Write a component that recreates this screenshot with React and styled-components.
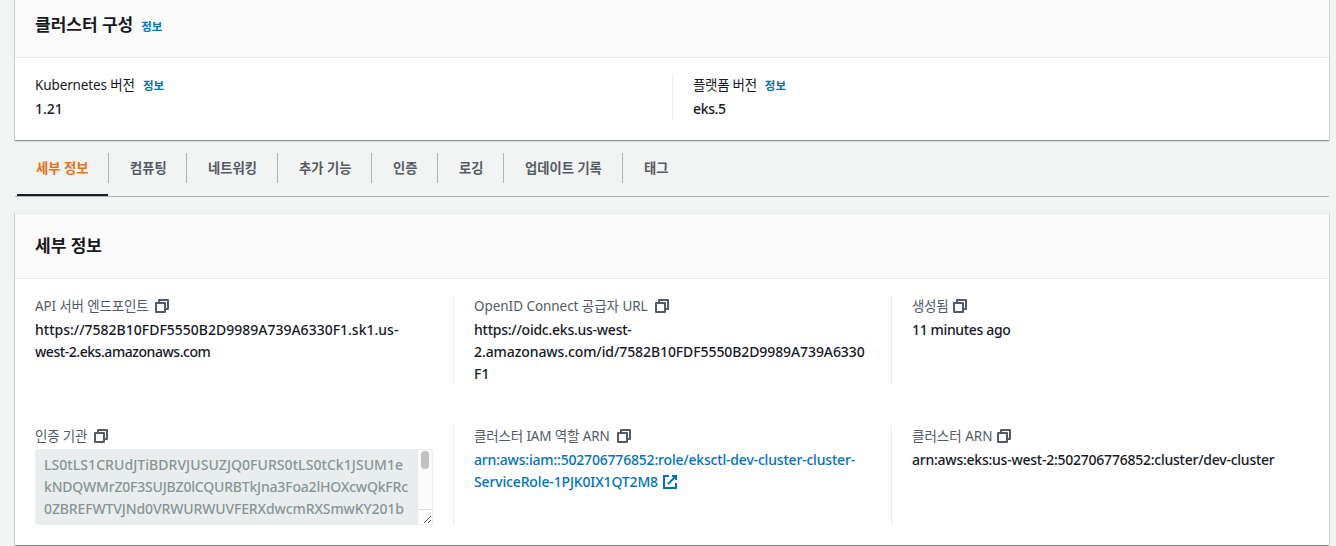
import React from "react";
import styled, { createGlobalStyle } from "styled-components";

const GlobalStyle = createGlobalStyle`
  * { box-sizing: border-box; }
  body {
    margin: 0;
    background: #f2f3f3;
    color: #16191f;
    font: 14px/22px "Noto Sans", "Noto Sans CJK KR", sans-serif;
    overflow: hidden;
  }
`;

const Page = styled.main`
  width: 1314px;
  height: 546px;
  margin-left: 15px;
  display: flex;
  flex-direction: column;
  overflow: visible;
`;

const Panel = styled.section`
  background: #fff;
  border-top: ${(p) => (p.$continued ? "0" : "1px solid #eaeded")};
  box-shadow: 1px 0 0 0 #d0d4d4, -1px 0 0 0 #c9cecf, 0 1px 0 0 #d9dddd;
  border-bottom: 1px solid #879596;
`;

const PanelHeader = styled.header`
  display: flex;
  align-items: center;
  gap: 8px;
  height: ${(p) => p.$height}px;
  padding: 0 20px ${(p) => p.$bottom}px;
  background: #fafafa;
  border-bottom: 1px solid #eaeded;
`;

const Title = styled.h2`
  margin: 0;
  font-size: 17px;
  font-weight: 700;
  line-height: 22px;
  white-space: nowrap;
`;

const InfoLink = styled.a`
  color: #0073bb;
  font-size: 11.5px;
  font-weight: 700;
  line-height: 22px;
  letter-spacing: 0;
  position: relative;
  top: ${(p) => p.$drop || 0}px;
`;

const Columns = styled.div`
  display: grid;
  grid-template-columns: repeat(${(p) => p.$count}, 1fr);
  row-gap: 40px;
  padding: 16px 0 ${(p) => p.$bottom}px;
`;

const Cell = styled.div`
  display: flex;
  flex-direction: column;
  gap: 2px;
  min-width: 0;
  padding: 0 20px;
  border-left: 1px solid ${(p) => (p.$first ? "transparent" : "#eaeded")};
  padding-left: ${(p) => (p.$first ? 19 : 20)}px;
`;

const Label = styled.div`
  display: flex;
  align-items: center;
  height: 22px;
  gap: ${(p) => p.$gap ?? 6}px;
  color: ${(p) => (p.$strong ? "#16191f" : "#545b64")};
  font-size: 13.5px;
  letter-spacing: ${(p) => p.$track || 0}px;
  white-space: nowrap;
`;

const Line = styled.div`
  display: flex;
  align-items: center;
  gap: 4px;
  height: 22px;
  color: ${(p) => (p.$link ? "#0073bb" : "#16191f")};
  font-weight: 500;
  letter-spacing: ${(p) => p.$track || 0}px;
  white-space: nowrap;
`;

const Tabs = styled.nav`
  display: flex;
  height: 56px;
  padding-left: 2px;
  border-bottom: 1px solid #aab7b8;
`;

const Tab = styled.button`
  position: relative;
  width: ${(p) => p.$width}px;
  padding: 1px 0 0 ${(p) => (p.$active ? 19 : 21)}px;
  border: 0;
  border-bottom: 2px solid ${(p) => (p.$active ? "#16191f" : "transparent")};
  background: none;
  color: ${(p) => (p.$active ? "#ec7211" : "#545b64")};
  font: 700 13.3px/22px "Noto Sans", "Noto Sans CJK KR", sans-serif;
  text-align: left;
  white-space: nowrap;
`;

const TabDivider = styled.span`
  width: 1px;
  height: 30px;
  margin-top: 12px;
  background: #aab7b8;
`;

const Spacer = styled.div`
  height: 16px;
`;

const CertBox = styled.div`
  display: flex;
  width: 398px;
  height: 76px;
  border: 1px solid #eaeded;
  border-radius: 2px;
  background: #eaeded;
  overflow: hidden;
`;

const CertText = styled.div`
  flex: 1;
  padding: 4px 0 0 8px;
`;

const CertLine = styled(Line)`
  color: #879596;
`;

const ScrollTrack = styled.div`
  display: flex;
  flex-direction: column;
  align-items: center;
  justify-content: space-between;
  width: 15px;
  padding-top: 1px;
  border-left: 1px solid #e8e8e8;
  background: #fafafa;
`;

const ScrollThumb = styled.div`
  width: 8px;
  height: 18px;
  border-radius: 4px;
  background: #c1c1c1;
`;

const ResizeCorner = styled.div`
  display: flex;
  align-items: flex-end;
  justify-content: flex-end;
  width: 14px;
  height: 15px;
  border-top: 1px solid #dcdcdc;
  background: #fff;
`;

const Svg = styled.svg`
  display: block;
  flex: none;
  fill: none;
  stroke: currentColor;
  stroke-width: 2;
`;

const CopyIcon = () => (
  <Svg width="16" height="16" viewBox="0 0 16 16" strokeLinejoin="round">
    <path d="M2 5h9v9H2z" />
    <path d="M5 5V2h9v9h-3" />
  </Svg>
);

const ExternalIcon = () => (
  <Svg width="16" height="16" viewBox="0 0 16 16">
    <path d="M10 2h4v4" />
    <path d="M6 10l8-8" />
    <path d="M14 9.05V14H2V2h5" />
  </Svg>
);

const TABS = [
  { name: "세부 정보", width: 91 },
  { name: "컴퓨팅", width: 77 },
  { name: "네트워킹", width: 90 },
  { name: "추가 기능", width: 93 },
  { name: "인증", width: 65 },
  { name: "로깅", width: 65 },
  { name: "업데이트 기록", width: 118 },
  { name: "태그", width: 78 },
];

const CERT = [
  { text: "LS0tLS1CRUdJTiBDRVJUSUZJQ0FURS0tLS0tCk1JSUM1e", track: 0.06 },
  { text: "kNDQWMrZ0F3SUJBZ0lCQURBTkJna3Foa2lHOXcwQkFRc", track: -0.19 },
  { text: "0ZBREFWTVJNd0VRWURWUVFERXdwcmRXSmwKY201b", track: -0.12 },
];

const DETAILS = [
  {
    label: "API 서버 엔드포인트",
    track: -0.15,
    gap: 5,
    lines: [
      { text: "https://7582B10FDF5550B2D9989A739A6330F1.sk1.us-", track: 0 },
      { text: "west-2.eks.amazonaws.com", track: -0.45 },
    ],
  },
  {
    label: "OpenID Connect 공급자 URL",
    track: -0.05,
    lines: [
      { text: "https://oidc.eks.us-west-", track: -0.25 },
      { text: "2.amazonaws.com/id/7582B10FDF5550B2D9989A739A6330", track: -0.09 },
      { text: "F1" },
    ],
  },
  { label: "생성됨", gap: 4, track: -0.3, lines: [{ text: "11 minutes ago", track: -0.35 }] },
  { label: "인증 기관", track: -0.2, cert: true },
  {
    label: "클러스터 IAM 역할 ARN",
    track: -0.15,
    lines: [
      { text: "arn:aws:iam::502706776852:role/eksctl-dev-cluster-cluster-", link: true, track: -0.19 },
      { text: "ServiceRole-1PJK0IX1QT2M8", link: true, external: true, track: -0.15 },
    ],
  },
  {
    label: "클러스터 ARN",
    gap: 4,
    lines: [{ text: "arn:aws:eks:us-west-2:502706776852:cluster/dev-cluster", track: -0.24 }],
  },
];

function Certificate() {
  return (
    <CertBox>
      <CertText>
        {CERT.map((l) => (
          <CertLine key={l.text} $track={l.track}>{l.text}</CertLine>
        ))}
      </CertText>
      <ScrollTrack>
        <ScrollThumb />
        <ResizeCorner>
          <svg width="9" height="9" viewBox="0 0 9 9" stroke="#555" strokeWidth="1">
            <path d="M1 8L8 1M5 8l3-3" />
          </svg>
        </ResizeCorner>
      </ScrollTrack>
    </CertBox>
  );
}

export default function App() {
  return (
    <>
      <GlobalStyle />
      <Page>
        <Panel $continued>
          <PanelHeader $height={58} $bottom={8}>
            <Title>클러스터 구성</Title>
            <InfoLink $drop={2}>정보</InfoLink>
          </PanelHeader>
          <Columns $count={2} $bottom={20}>
            <Cell $first>
              <Label $strong $gap={8} $track={-0.12}>
                <span>Kubernetes 버전</span>
                <InfoLink $drop={1}>정보</InfoLink>
              </Label>
              <Line>1.21</Line>
            </Cell>
            <Cell>
              <Label $strong $gap={8} $track={-0.3}>
                <span>플랫폼 버전</span>
                <InfoLink $drop={1}>정보</InfoLink>
              </Label>
              <Line $track={-0.35}>eks.5</Line>
            </Cell>
          </Columns>
        </Panel>

        <Tabs>
          {TABS.map((t, i) => (
            <React.Fragment key={t.name}>
              {i > 0 && <TabDivider />}
              <Tab $active={i === 0} $width={t.width}>{t.name}</Tab>
            </React.Fragment>
          ))}
        </Tabs>
        <Spacer />

        <Panel>
          <PanelHeader $height={65} $bottom={1}>
            <Title>세부 정보</Title>
          </PanelHeader>
          <Columns $count={3} $bottom={20}>
            {DETAILS.map((d, i) => (
              <Cell key={d.label} $first={i % 3 === 0}>
                <Label $gap={d.gap} $track={d.track}>
                  <span>{d.label}</span>
                  <CopyIcon />
                </Label>
                {d.cert ? (
                  <Certificate />
                ) : (
                  <div>
                    {d.lines.map((l) => (
                      <Line key={l.text} $link={l.link} $track={l.track}>
                        <span>{l.text}</span>
                        {l.external && <ExternalIcon />}
                      </Line>
                    ))}
                  </div>
                )}
              </Cell>
            ))}
          </Columns>
        </Panel>
      </Page>
    </>
  );
}
